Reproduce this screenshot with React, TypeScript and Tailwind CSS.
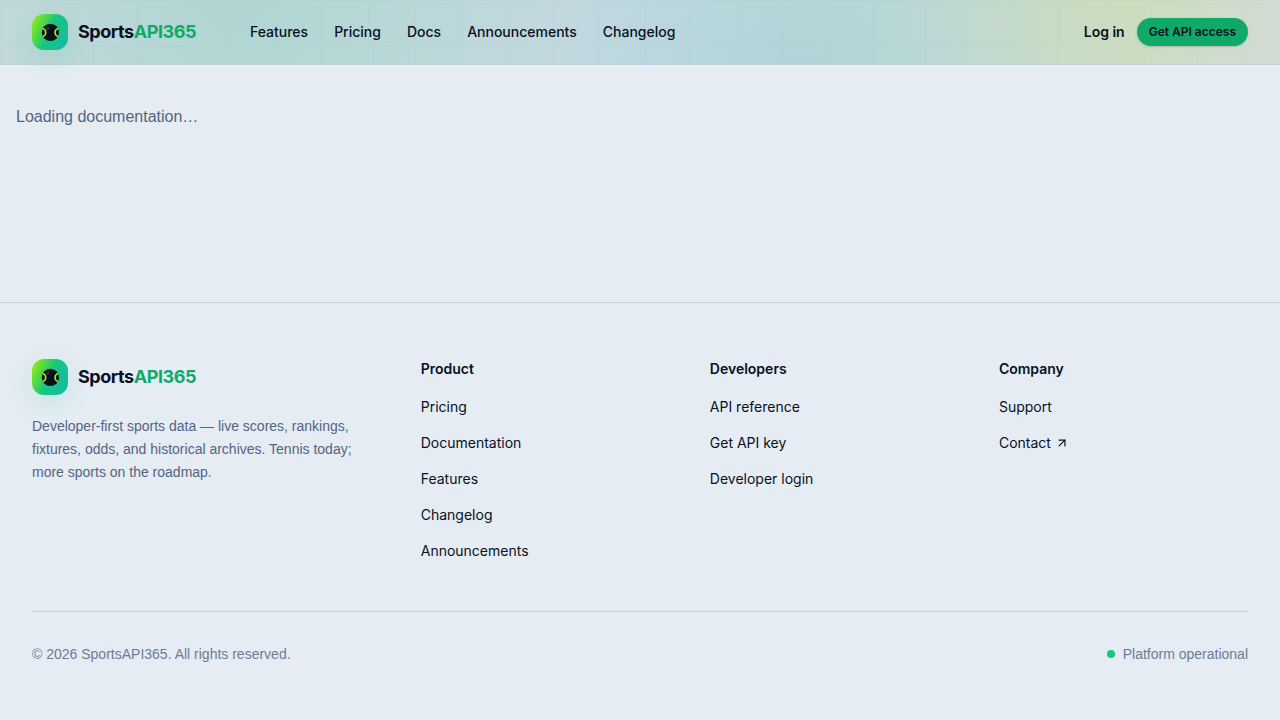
import React from 'react';
import { ArrowUpRight } from 'lucide-react';

const navLinks = ['Features', 'Pricing', 'Docs', 'Announcements', 'Changelog'];

const footerColumns = [
  {
    title: 'Product',
    links: [
      { label: 'Pricing' },
      { label: 'Documentation' },
      { label: 'Features' },
      { label: 'Changelog' },
      { label: 'Announcements' }
    ]
  },
  {
    title: 'Developers',
    links: [{ label: 'API reference' }, { label: 'Get API key' }, { label: 'Developer login' }]
  },
  {
    title: 'Company',
    links: [{ label: 'Support' }, { label: 'Contact', external: true }]
  }
];

function Brand() {
  return (
    <a href="#" className="flex w-fit items-center gap-2.5">
      <span className="flex h-9 w-9 items-center justify-center rounded-xl bg-[linear-gradient(115deg,#a3f000_0%,#18c77c_48%,#14b8b0_100%)] shadow-[0_8px_24px_rgba(24,199,124,0.16)]">
        <svg viewBox="0 0 18 18" className="h-[18px] w-[18px]" aria-hidden="true">
          <circle cx="9.4" cy="9.4" r="8.6" fill="#07111f" />
          <ellipse cx="6.8" cy="5.4" rx="2" ry="1.3" fill="#fff" opacity="0.15" transform="rotate(-35 6.8 5.4)" />
          <path d="M1.6 5.4C5.8 6.4 5.8 12.4 1.6 13.4" fill="none" stroke="#b4f000" strokeWidth="1.5" />
          <path d="M17.2 5.4C13 6.4 13 12.4 17.2 13.4" fill="none" stroke="#b4f000" strokeWidth="1.5" />
        </svg>
      </span>
      <span className="text-lg font-bold tracking-tight text-[#07111f]">
        Sports<span className="text-[#10a968]">API365</span>
      </span>
    </a>
  );
}

function Header() {
  return (
    <header className="border-b border-[#c5d0dd] bg-[linear-gradient(rgba(7,17,31,0.02)_1px,transparent_1px),linear-gradient(90deg,rgba(7,17,31,0.02)_1px,transparent_1px),radial-gradient(circle_at_18%_0%,rgba(24,199,124,0.14),transparent_360px),radial-gradient(circle_at_62%_120%,rgba(20,184,200,0.1),transparent_260px),radial-gradient(circle_at_88%_0%,rgba(190,230,60,0.16),transparent_200px),linear-gradient(90deg,#cbd9e0,#c3d8df_50%,#c1d8d8_68%,#c8dad3_80%,#d3dcd9)] bg-[length:46px_46px,46px_46px,auto,auto,auto,auto]">
      <div className="flex h-16 items-center px-8">
        <Brand />
        <nav className="ml-[54px] flex items-center gap-[26px]">
          {navLinks.map((label) => (
            <a key={label} href="#" className="text-sm font-medium">
              {label}
            </a>
          ))}
        </nav>
        <div className="ml-auto flex items-center gap-3">
          <a href="#" className="text-sm font-semibold">
            Log in
          </a>
          <button className="h-7 rounded-full bg-[#10a968] px-3 text-xs font-semibold shadow-sm">
            Get API access
          </button>
        </div>
      </div>
    </header>
  );
}

function Footer() {
  return (
    <footer className="border-t border-[#c8d2df] px-8 py-14">
      <div className="grid grid-cols-[1.4fr_1fr_1fr_1fr] gap-10">
        <div>
          <Brand />
          <p className="mt-5 font-['Liberation_Sans',sans-serif] text-sm leading-[23px] text-[#526580]">
            Developer-first sports data — live scores, rankings, fixtures, odds, and historical archives. Tennis today;
            more sports on the roadmap.
          </p>
        </div>
        {footerColumns.map((column) => (
          <div key={column.title}>
            <h3 className="text-sm font-semibold">{column.title}</h3>
            <ul className="mt-4 flex flex-col gap-3">
              {column.links.map((link) => (
                <li key={link.label} className="flex h-6 items-center">
                  <a href="#" className="inline-flex items-center gap-1 text-sm">
                    {link.label}
                    {'external' in link && <ArrowUpRight className="h-3.5 w-3.5" />}
                  </a>
                </li>
              ))}
            </ul>
          </div>
        ))}
      </div>
      <div className="mt-12 flex items-center justify-between border-t border-[#c8d2df] pt-8 font-['Liberation_Sans',sans-serif] text-sm text-[#6b7d95]">
        <p>© 2026 SportsAPI365. All rights reserved.</p>
        <p className="flex items-center gap-2">
          <span className="h-2 w-2 rounded-full bg-[#18c77c]" />
          Platform operational
        </p>
      </div>
    </footer>
  );
}

export default function App() {
  return (
    <div className="flex min-h-screen flex-col bg-[#e5ecf4] font-['Inter',sans-serif] text-[#07111f]">
      <Header />
      <main className="flex-1 px-4 py-10">
        <p className="font-['Liberation_Sans',sans-serif] text-base text-[#526580]">Loading documentation…</p>
      </main>
      <Footer />
    </div>
  );
}
